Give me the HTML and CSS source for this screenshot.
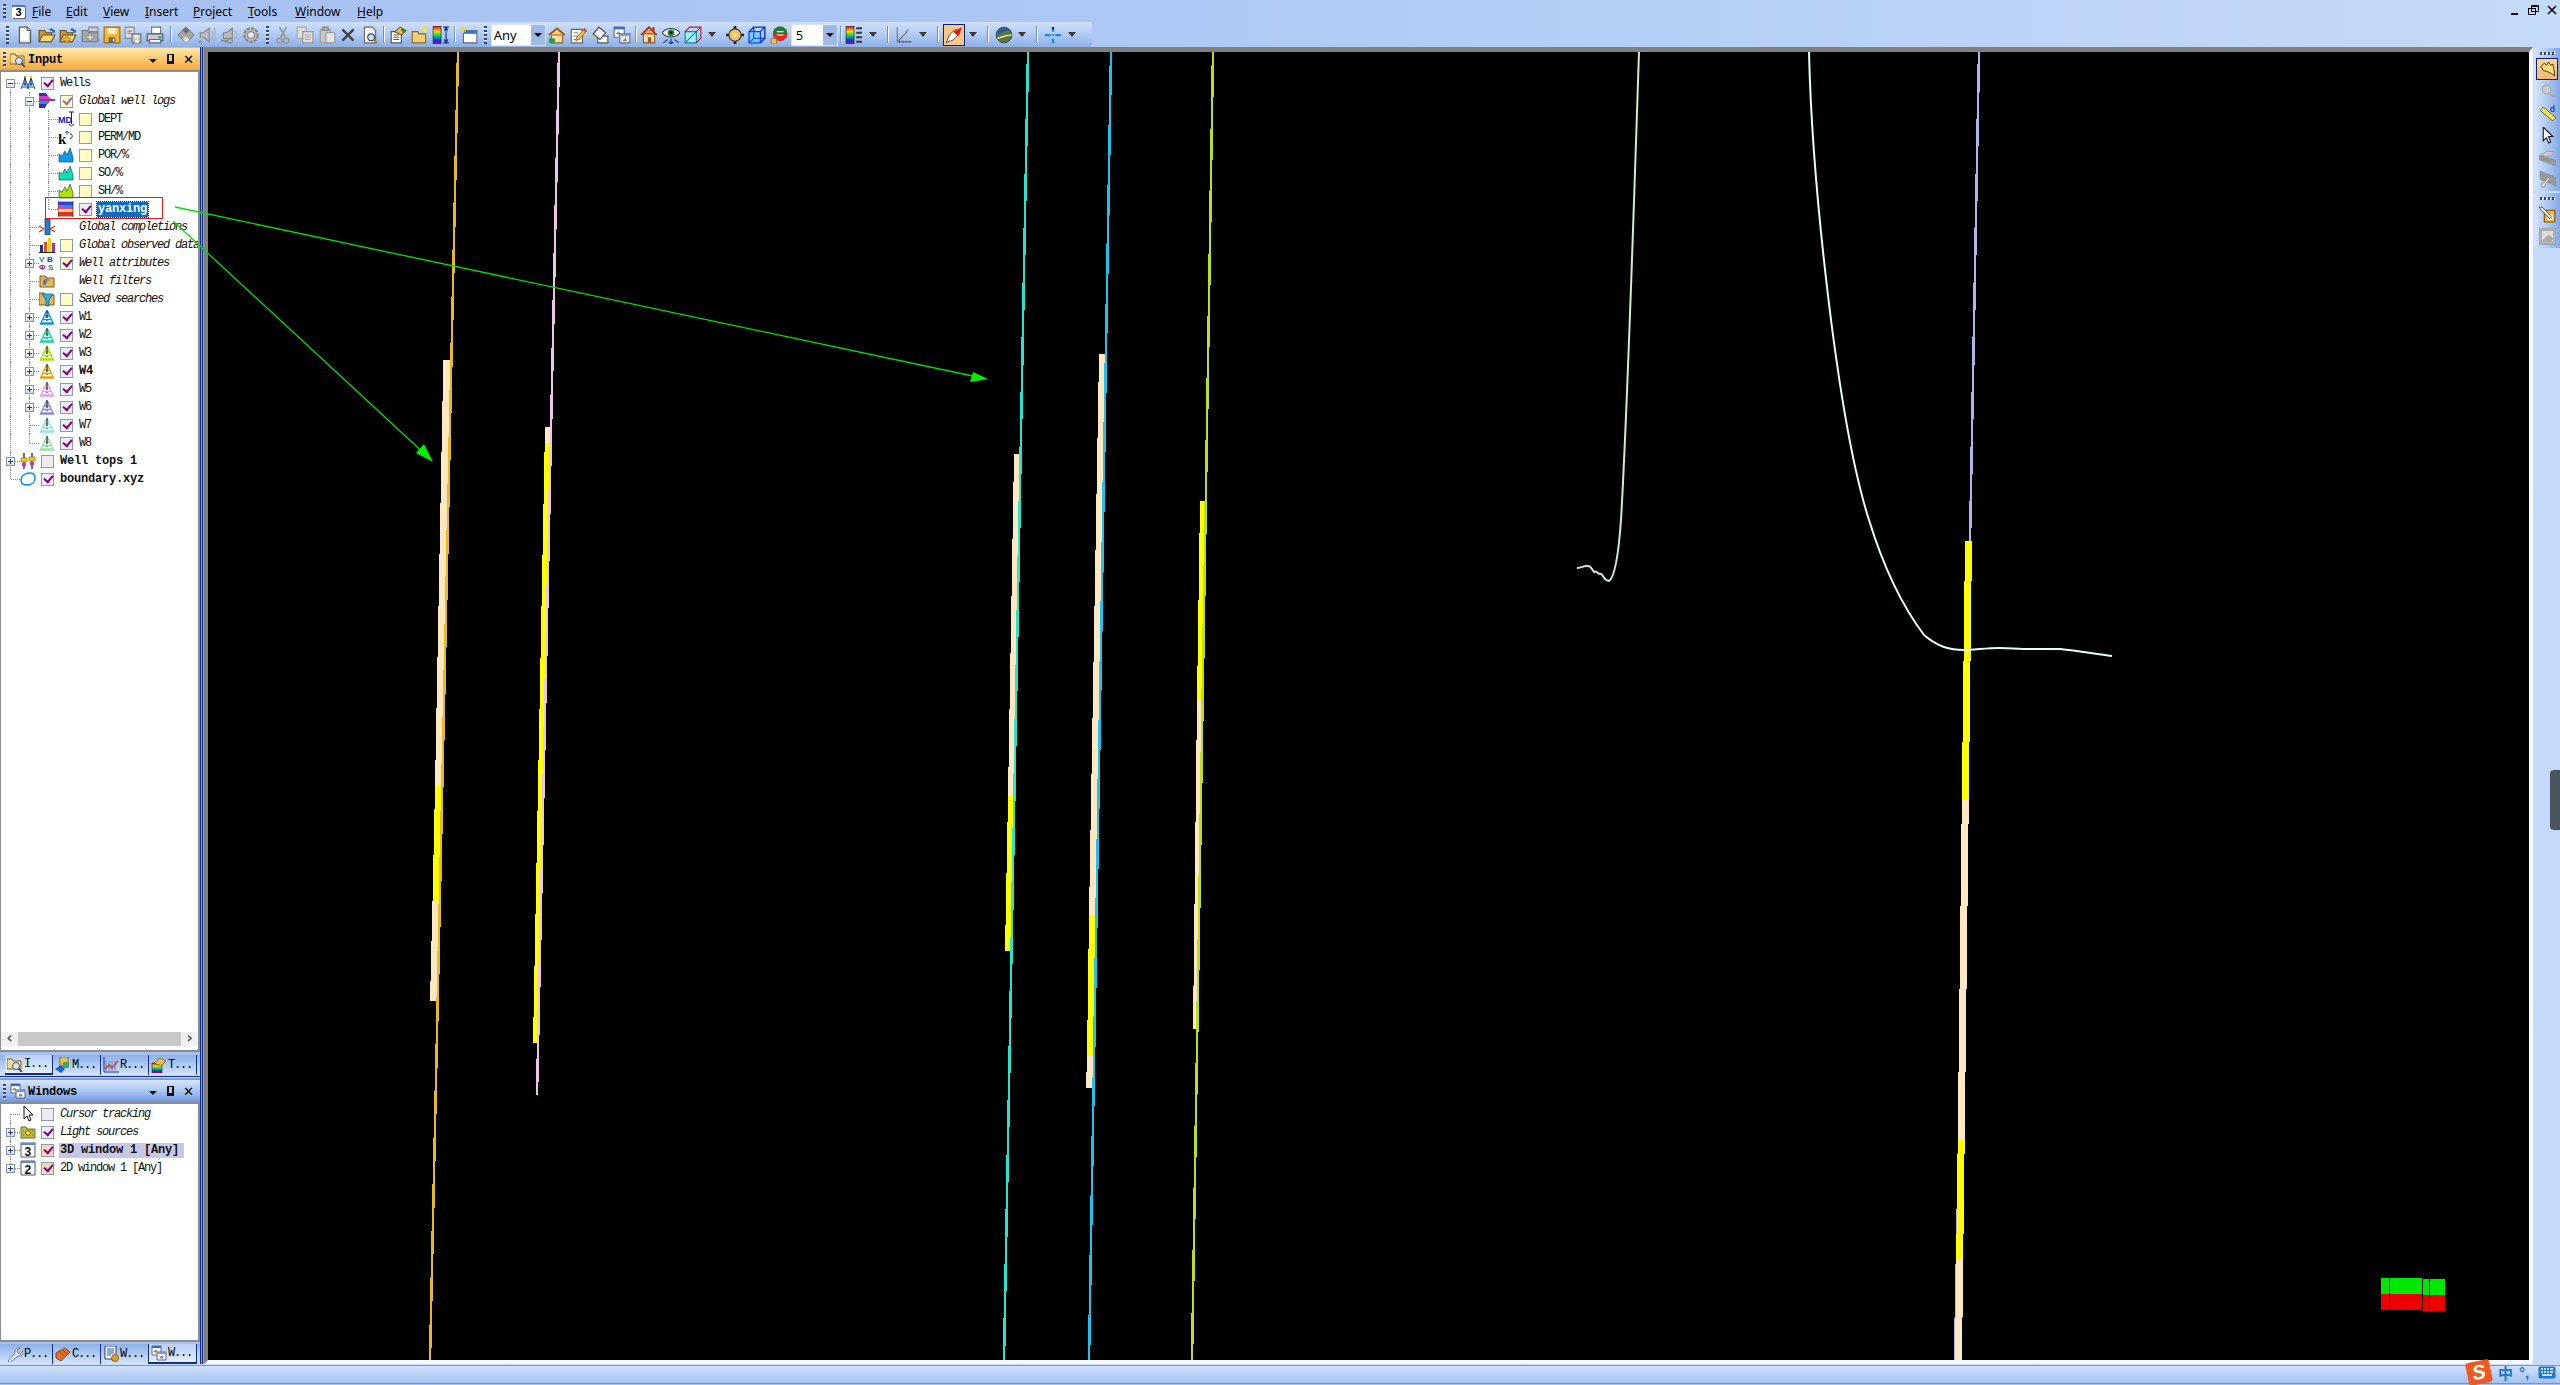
FILE: index.html
```html
<!DOCTYPE html>
<html lang="en">
<head>
<meta charset="utf-8">
<title>3D window 1</title>
<link rel="stylesheet" href="styles.css">
</head>
<body>
<svg class="defs" aria-hidden="true">
  <symbol id="new" viewBox="0 0 16 16"><path d="M3 1h7l3 3v11H3z" fill="#fff" stroke="#555"/><path d="M10 1v3h3" fill="#ddd" stroke="#555"/><path d="M12 5v9H5" fill="none" stroke="#bcc6d8"/></symbol>
  <symbol id="open" viewBox="0 0 16 16"><path d="M1 14V4h5l1 2h5v8z" fill="#c8963c" stroke="#6b5320"/><path d="M1 14l3-6h11l-3 6z" fill="#f6d47a" stroke="#6b5320"/><path d="M10 3c2-2 3-1 4 1l1-1v3h-3l1-1c-1-1-2-1-3-2z" fill="#2f5fb0"/></symbol>
  <symbol id="openplus" viewBox="0 0 16 16"><path d="M1 14V4h5l1 2h5v8z" fill="#c8963c" stroke="#6b5320"/><path d="M1 14l3-6h11l-3 6z" fill="#f6d47a" stroke="#6b5320"/><path d="M4 11h2V9h2v2h2v2H8v2H6v-2H4z" fill="#f8b818" stroke="#a06010" stroke-width=".5"/><path d="M10 3c2-2 3-1 4 1l1-1v3h-3l1-1c-1-1-2-1-3-2z" fill="#2f5fb0"/></symbol>
  <symbol id="foldergrey" viewBox="0 0 16 16"><path d="M1 14V4h5l1 2h8v8z" fill="#a8a8a8" stroke="#777"/><path d="M5 9h2V7h2v2h2v2H9v2H7v-2H5z" fill="#e0e0e0" stroke="#777" stroke-width=".5"/><path d="M7 1h8v4H7z" fill="#ccc" stroke="#888"/></symbol>
  <symbol id="save" viewBox="0 0 16 16"><path d="M1 1h14v14H1z" fill="#f6b62c" stroke="#a86a10"/><path d="M4 2h8v5H4z" fill="#fff4cc"/><path d="M5 10h6v5H5z" fill="#6b6b6b"/><path d="M9 11h1v3H9z" fill="#eee"/></symbol>
  <symbol id="saveas" viewBox="0 0 16 16"><path d="M1 1h8v10H1z" fill="#ddd" stroke="#888"/><path d="M7 7h8v8H7z" fill="#bbb" stroke="#777"/><path d="M9 8h4v3H9zM10 12h3v3h-3z" fill="#eee"/><path d="M3 4h4v1H3zM3 6h3v1H3z" fill="#888"/></symbol>
  <symbol id="print" viewBox="0 0 16 16"><path d="M5 1h8v6H5z" fill="#fff" stroke="#777"/><path d="M1 7h14v6H1z" fill="#c4ccd8" stroke="#556"/><path d="M3 12h10v3H3z" fill="#eef" stroke="#667"/><path d="M11 9h3v2h-3z" fill="#18b050"/></symbol>
  <symbol id="diamond" viewBox="0 0 16 16"><path d="M8 1l7 7-7 7-7-7z" fill="#a9a9a9" stroke="#8a8a8a"/><path d="M8 1l3 3-3 3-3-3z" fill="#6f6f6f"/><path d="M8 15l-3-3 3-3 3 3z" fill="#ddd"/></symbol>
  <symbol id="speaker" viewBox="0 0 16 16"><path d="M2 6h3l5-4v12l-5-4H2z" fill="#bbb" stroke="#888"/><path d="M12 4c2 2 2 6 0 8M14 2c3 3 3 9 0 12" fill="none" stroke="#aaa"/><circle cx="2" cy="14" r="1.600" fill="#999"/></symbol>
  <symbol id="speakerkey" viewBox="0 0 16 16"><path d="M3 6h3l5-4v9H3z" fill="#bbb" stroke="#888"/><path d="M13 4c2 2 2 6 0 8" fill="none" stroke="#aaa"/><path d="M1 13h6M5 13v2" stroke="#888" stroke-width="1.400"/><circle cx="9" cy="13" r="2" fill="none" stroke="#888"/></symbol>
  <symbol id="gear" viewBox="0 0 16 16"><circle cx="8" cy="8" r="6" fill="#bbb" stroke="#888" stroke-width="2" stroke-dasharray="3 1"/><circle cx="8" cy="8" r="3" fill="#eee" stroke="#888"/></symbol>
  <symbol id="cut" viewBox="0 0 16 16"><path d="M5 1l5 9M11 1L6 10" stroke="#999" stroke-width="1.600" fill="none"/><circle cx="5" cy="13" r="2.200" fill="none" stroke="#999" stroke-width="1.400"/><circle cx="11" cy="13" r="2.200" fill="none" stroke="#999" stroke-width="1.400"/></symbol>
  <symbol id="copy" viewBox="0 0 16 16"><path d="M1 1h8v10H1z" fill="#ddd" stroke="#aaa"/><path d="M6 5h9v10H6z" fill="#ddd" stroke="#999"/><path d="M8 8h5M8 10h5M8 12h5" stroke="#aaa"/></symbol>
  <symbol id="paste" viewBox="0 0 16 16"><path d="M2 3h9v12H2z" fill="#c8c8c8" stroke="#999"/><path d="M4 1h5v3H4z" fill="#aaa" stroke="#888"/><path d="M7 6h8v9H7z" fill="#e4e4e4" stroke="#999"/></symbol>
  <symbol id="del" viewBox="0 0 16 16"><path d="M3 3l10 10M13 3L3 13" stroke="#444" stroke-width="2.200"/></symbol>
  <symbol id="find" viewBox="0 0 16 16"><path d="M3 1h7l3 3v11H3z" fill="#fff" stroke="#666"/><circle cx="9" cy="10" r="3" fill="#bfe4ff" stroke="#444"/><path d="M11 12l3 3" stroke="#b08020" stroke-width="2"/></symbol>
  <symbol id="props" viewBox="0 0 16 16"><path d="M2 5h9v10H2z" fill="#fff" stroke="#555"/><path d="M4 8h5M4 10h5M4 12h5" stroke="#555"/><path d="M5 5l5-4 5 3-4 4z" fill="#e8c050" stroke="#7a5a10"/><path d="M11 3l3 2" stroke="#1a8a30" stroke-width="2"/></symbol>
  <symbol id="foldernew" viewBox="0 0 16 16"><path d="M1 15V5h5l1 2h6v8z" fill="#f4d070" stroke="#8a6a20"/><path d="M12 0v6M9 3h6M10 1l4 4M14 1l-4 4" stroke="#f4e040"/></symbol>
  <symbol id="colorbar" viewBox="0 0 16 16"><defs><linearGradient id="rb" x1="0" y1="0" x2="0" y2="1"><stop offset="0" stop-color="#e00040"/><stop offset=".3" stop-color="#f0e000"/><stop offset=".55" stop-color="#00d060"/><stop offset=".8" stop-color="#1030e0"/><stop offset="1" stop-color="#c000c0"/></linearGradient></defs><path d="M1 0h7v16H1z" fill="url(#rb)" stroke="#222" stroke-width=".6"/><path d="M10 1h5M10 15h5M12.500 1v14M11 4l1.500-3L14 4M11 12l1.500 3L14 12" stroke="#103090" fill="none"/></symbol>
  <symbol id="winnew" viewBox="0 0 16 16"><path d="M3 4h12v11H3z" fill="#fff" stroke="#667"/><path d="M3 4h12v3H3z" fill="#3a78c8"/><path d="M3 0v6M0 3h6M1 1l4 4M5 1L1 5" stroke="#f4d840"/></symbol>
  <symbol id="homegreen" viewBox="0 0 16 16"><path d="M1 8l7-6 7 6" fill="#f4d080" stroke="#a05010" stroke-width="1.500"/><path d="M3 8h10v7H3z" fill="#f6dca0" stroke="#a06020"/><path d="M1 11h5v4H1z" fill="#1aa030"/></symbol>
  <symbol id="note" viewBox="0 0 16 16"><path d="M2 3h10v12H2z" fill="#fff" stroke="#666"/><path d="M4 6h4M4 9h4M4 12h6" stroke="#888"/><path d="M7 10l7-8 2 2-7 8-3 1z" fill="#f4c040" stroke="#905020" stroke-width=".7"/><path d="M13 3l2 2" stroke="#e04020" stroke-width="1.500"/></symbol>
  <symbol id="bucket" viewBox="0 0 16 16"><path d="M6 9h9v6H6z" fill="#fff" stroke="#555"/><path d="M2 7l5-6 6 5-5 6z" fill="#eef" stroke="#445"/><path d="M1 8c-1 2 0 3 1 3s1-2 1-3z" fill="#f0c040"/></symbol>
  <symbol id="twowin" viewBox="0 0 16 16"><path d="M1 1h9v9H1z" fill="#fff" stroke="#668"/><path d="M1 1h9v2H1z" fill="#3a6ac0"/><path d="M6 7h9v8H6z" fill="#eef" stroke="#668"/><path d="M6 7h9v2H6z" fill="#7a9ad8"/><path d="M3 7l2-2 1 2zM9 13l2-2 1 2z" fill="#e0b000" stroke="#222" stroke-width=".4"/></symbol>
  <symbol id="house" viewBox="0 0 16 16"><path d="M1 8l7-7 7 7" fill="#f0a060" stroke="#a03010" stroke-width="1.500"/><path d="M3 7h10v8H3z" fill="#f8e0a8" stroke="#906020"/><path d="M7 10h3v5H7z" fill="#a05820"/><path d="M11 1h2v4h-2z" fill="#c03020"/></symbol>
  <symbol id="eye" viewBox="0 0 16 16"><path d="M0 6c4-5 12-5 16 0-4 5-12 5-16 0z" fill="#eee" stroke="#333"/><circle cx="8" cy="6" r="3" fill="#1a8a40"/><circle cx="8" cy="6" r="1.200" fill="#000"/><path d="M1 15l4-3M15 15l-4-3M8 11v5M6 14l2 2 2-2" stroke="#1a3a90" fill="none"/></symbol>
  <symbol id="cube" viewBox="0 0 16 16"><path d="M1 5h10v10H1z" fill="#a8ecf4" stroke="#108898"/><path d="M1 5l4-4h10v10l-4 4" fill="none" stroke="#b02030"/><path d="M11 5l4-4" stroke="#b02030"/><path d="M1 15L11 5" stroke="#108898"/></symbol>
  <symbol id="target" viewBox="0 0 16 16"><path d="M8 0v16M0 8h16" stroke="#222" stroke-width="2.400"/><circle cx="8" cy="8" r="5.500" fill="#f4c060" stroke="#333"/><circle cx="8" cy="8" r="2" fill="#f8e0a0"/></symbol>
  <symbol id="bluecube" viewBox="0 0 16 16"><path d="M1 5h10v10H1zM5 1h10v10H5zM1 5l4-4M11 5l4-4M1 15l4-4M11 15l4-4" fill="none" stroke="#0030e0" stroke-width="1.200"/><path d="M1 5h10v10H1z" fill="#30d0f0" opacity=".35"/></symbol>
  <symbol id="lockglobe" viewBox="0 0 16 16"><circle cx="9" cy="7" r="6.500" fill="#e02828"/><path d="M2.500 7a6.500 6.500 0 0 1 13 0z" fill="#1a8030"/><path d="M6 5h6M6 8h6" stroke="#fff"/><path d="M1 11h5v5H1z" fill="#e8c050" stroke="#806010" stroke-width=".6"/></symbol>
  <symbol id="legend" viewBox="0 0 16 16"><path d="M1 0h7v16H1z" fill="url(#rb)" stroke="#222" stroke-width=".6"/><path d="M10 2h5M10 6h5M10 10h5M10 14h5" stroke="#333" stroke-width="1.600"/></symbol>
  <symbol id="axes" viewBox="0 0 16 16"><path d="M2 1v13h13M2 14l9-9" stroke="#777" fill="none"/><path d="M4 15v-2M7 15v-2M10 15v-2M13 15v-2" stroke="#555"/><path d="M9 6l3-3" stroke="#999" stroke-width="1.500"/></symbol>
  <symbol id="pencil" viewBox="0 0 16 16"><path d="M1 15l3-7 5-5 4 3-5 6z" fill="#fff" stroke="#333" stroke-width=".7"/><path d="M7 5l8-4-3 8z" fill="#e01818"/></symbol>
  <symbol id="globe" viewBox="0 0 16 16"><circle cx="8" cy="8" r="7" fill="#5a7a3a" stroke="#222" stroke-width=".6"/><path d="M2 5c3-3 8-4 11-2 1 2-5 1-7 3S3 8 2 5z" fill="#2a5ab0"/><path d="M2 11c4-1 8-3 13-3" stroke="#fff" fill="none"/></symbol>
  <symbol id="cross" viewBox="0 0 16 16"><path d="M1 8h5M10 8h5M8 1v4M8 11v4" stroke="#1a8ae0" stroke-width="2"/><path d="M7 1h2v2H7z" fill="#103060"/><circle cx="8" cy="8" r="1" fill="#1a8ae0"/></symbol>

  <symbol id="t-wells" viewBox="0 0 16 16"><path d="M1 14L5 3l4 11M7 14l4-11 4 11M3 9h4M9 9h4M2 12h6M8 12h6" stroke="#0a50d0" fill="none"/><path d="M5 1v10M11 1v10" stroke="#111"/><circle cx="11" cy="2" r="1.500" fill="#f0d020"/></symbol>
  <symbol id="t-logs" viewBox="0 0 16 16"><path d="M0 0h7l2 3H0z" fill="#3030c0"/><path d="M0 3h9l3 3H0z" fill="#d040c0"/><path d="M0 6h16v2H0z" fill="#a030a0"/><path d="M0 8h11l-2 3H0z" fill="#2090e0"/><path d="M0 11h8l-2 4H0z" fill="#3030c0"/></symbol>
  <symbol id="t-hist" viewBox="0 0 16 16"><path d="M1 15V7l3 2 3-5 2 4 3-7 3 9v5z" fill="currentColor" stroke="#0b3a58" stroke-width=".6"/></symbol>
  <symbol id="t-yan" viewBox="0 0 16 16"><path d="M0 1h15v3H0z" fill="#3040d0"/><path d="M0 4h15v4H0z" fill="#e040c0"/><path d="M0 8h15v3H0z" fill="#f0e020"/><path d="M0 11h15v4H0z" fill="#e03030"/><path d="M6 4h9v3H6z" fill="#2090e0"/><path d="M0 0h15v16H0z" fill="none" stroke="#222" stroke-width=".7"/></symbol>
  <symbol id="t-comp" viewBox="0 0 16 16"><path d="M6 0h5v16H6z" fill="#2080d0" stroke="#103060" stroke-width=".7"/><path d="M0 7l5 3M0 13l5-3M11 10l5-3M11 10l5 3" stroke="#e03010" stroke-width="1.400"/></symbol>
  <symbol id="t-obs" viewBox="0 0 16 16"><path d="M1 8h3v7H1z" fill="#2030a0"/><path d="M5 5h3v10H5z" fill="#e05020"/><path d="M9 1h3v14H9z" fill="#f0d010"/><path d="M13 6h3v9h-3z" fill="#a030c0"/><path d="M0 15.500h16" stroke="#222"/></symbol>
  <symbol id="t-filt" viewBox="0 0 16 16"><path d="M1 14V3h5l1 2h8v9z" fill="#e8b850" stroke="#7a5a20"/><path d="M5 7h5M5 9h3M5 11h2M5 7v5" stroke="#2050c0"/></symbol>
  <symbol id="t-search" viewBox="0 0 16 16"><path d="M0 14V2h5l1 2h9v10z" fill="#e8b850" stroke="#7a5a20"/><path d="M3 3h11L10 9v6H7V9z" fill="#30b0e8" stroke="#105080" stroke-width=".7"/></symbol>
  <symbol id="t-der" viewBox="0 0 16 16"><path d="M1.500 15L7 3h2l5.500 12zM5 7h6M3.500 10.500h9M2 14h12" fill="none" stroke="currentColor" stroke-width="1.300"/><path d="M8 1v8" stroke="#222" stroke-width="1.200"/><path d="M8 11v1" stroke="#222"/></symbol>
  <symbol id="t-tops" viewBox="0 0 16 16"><path d="M4 0v16M12 0v16" stroke="#111" stroke-width="1.200"/><path d="M1 5h6v4H1zM9 4h6v4H9z" fill="#f0d010" stroke="#806000" stroke-width=".6"/><path d="M2 10h4v3H2zM10 9h4v3h-4z" fill="#d030d0"/></symbol>
  <symbol id="t-ring" viewBox="0 0 16 16"><path d="M1 9c0-4 4-7 9-7 4 0 5 2 5 5 0 4-3 7-8 7-4 0-6-2-6-5z" fill="none" stroke="#0a90e8" stroke-width="1.500"/></symbol>
  <symbol id="t-cursor" viewBox="0 0 16 16"><path d="M4 0v13l3-3 2 5 2-1-2-5h4z" fill="#fff" stroke="#111"/></symbol>
  <symbol id="t-light" viewBox="0 0 16 16"><path d="M1 14V3h5l1 2h8v9z" fill="#b8c048" stroke="#6a7020"/><circle cx="8" cy="9" r="2.500" fill="#f0e040" stroke="#806010"/><path d="M3 7h1M3 11h1M12 7h1M12 11h1" stroke="#806010"/></symbol>
  <symbol id="t-inp" viewBox="0 0 16 16"><path d="M0 13V3h5l1 2h8v8z" fill="#f8dc90" stroke="#806020"/><circle cx="9" cy="10" r="3.500" fill="#cfe8ff" stroke="#556"/><path d="M11.500 12.500L15 16" stroke="#555" stroke-width="2"/></symbol>
  <symbol id="t-model" viewBox="0 0 16 16"><path d="M5 0h8v9H5z" fill="#e8c050" stroke="#705010" stroke-width=".7"/><path d="M8 5h6v6H8z" fill="#50a060"/><path d="M0 12l6-4 4 4-4 4z" fill="#1a60e0"/></symbol>
  <symbol id="t-res" viewBox="0 0 16 16"><path d="M1 0v15h15" stroke="#203090" fill="none"/><path d="M2 12l4-4 3 3 6-7" stroke="#e85010" stroke-width="1.800" fill="none"/><path d="M3 4v10M6 4v10M9 4v10M12 4v10" stroke="#4060c0" stroke-width=".7"/></symbol>
  <symbol id="t-tpl" viewBox="0 0 16 16"><path d="M1 6h10v10H1z" fill="url(#rb)" stroke="#222" stroke-width=".6"/><path d="M3 6l6-5 6 3-5 5z" fill="#e8c050" stroke="#705010" stroke-width=".7"/></symbol>
  <symbol id="t-wrench" viewBox="0 0 16 16"><path d="M1 15l7-8a4 4 0 0 1 5-5l-3 3 1 2 2 1 3-3a4 4 0 0 1-5 5l-8 7z" fill="#d8e4f4" stroke="#667" stroke-width=".8"/></symbol>
  <symbol id="t-case" viewBox="0 0 16 16"><path d="M1 7l9-5 5 4-9 9-5-3z" fill="#e07028" stroke="#803010" stroke-width=".8"/><path d="M4 5l5 5M7 3l5 5" stroke="#a04010"/></symbol>
  <symbol id="t-flow" viewBox="0 0 16 16"><path d="M2 0h11v13H2z" fill="#fff" stroke="#1a3a90"/><path d="M4 3h7M4 5h7M4 7h7M4 9h4" stroke="#1a50c0"/><circle cx="12" cy="12" r="3.500" fill="#e0a020" stroke="#704010" stroke-width=".7"/></symbol>
  <symbol id="r-hand" viewBox="0 0 16 16"><path d="M2 5l3-3 2 2 2-3 2 3 2-1 1 5 1 6-3-2-4-2-4-1z" fill="#f8e070" stroke="#333" stroke-width=".9"/></symbol>
  <symbol id="r-zoom" viewBox="0 0 16 16"><circle cx="7" cy="6" r="4" fill="#ccc" stroke="#aaa"/><path d="M10 9l4 4" stroke="#aaa" stroke-width="2"/></symbol>
  <symbol id="r-g1" viewBox="0 0 16 16"><path d="M0 6l4 0 12 5v5L0 10z" fill="#999" stroke="#888" stroke-width=".5"/><path d="M2 5l6-3 6 1-2 3-6 1z" fill="#ccc" stroke="#999" stroke-width=".7"/></symbol>
  <symbol id="r-g2" viewBox="0 0 16 16"><path d="M1 0l15 6v8L1 8z" fill="#999" stroke="#888" stroke-width=".5"/><circle cx="4" cy="13" r="2" fill="#ddd" stroke="#999"/><path d="M5 12l4-5" stroke="#ddd"/></symbol>
  <symbol id="r-set" viewBox="0 0 16 16"><path d="M5 4h10v11H5z" fill="#f4b830" stroke="#805010"/><path d="M8 8h5v5H8z" fill="#fff"/><path d="M0 1l3 0 9 9-2 2-8-8z" fill="#dde4f0" stroke="#444" stroke-width=".8"/></symbol>
  <symbol id="r-pic" viewBox="0 0 16 16"><path d="M0 0h16v15H0z" fill="#c8c8c8" stroke="#888"/><path d="M2 2h12v11H2z" fill="#ddd" stroke="#999"/><path d="M3 12l6-6 5 4-3 3z" fill="#aaa"/></symbol>
</svg>

<div class="app">
  <header class="menubar">
    <span class="grip mgrip"></span>
    <span class="appicon">3</span>
    <nav class="menus">
      <span class="m1"><u>F</u>ile</span>
      <span class="m2"><u>E</u>dit</span>
      <span class="m3"><u>V</u>iew</span>
      <span class="m4"><u>I</u>nsert</span>
      <span class="m5"><u>P</u>roject</span>
      <span class="m6"><u>T</u>ools</span>
      <span class="m7"><u>W</u>indow</span>
      <span class="m8"><u>H</u>elp</span>
    </nav>
    <div class="winctl">
      <svg width="10" height="10" viewBox="0 0 10 10"><path d="M1 8h7v2H1z" fill="#000"/></svg>
      <svg width="11" height="10" viewBox="0 0 11 10"><path d="M3.500.5h7v6h-7zM.5 3.500h7v6h-7z" fill="#c3d9f8" stroke="#000"/><path d="M3 1h8v1H3zM0 3h8v1H0z" fill="#000"/></svg>
      <svg width="10" height="10" viewBox="0 0 10 10"><path d="M1 1l8 8M9 1L1 9" stroke="#000" stroke-width="1.600"/></svg>
    </div>
  </header>

  <div class="toolbar">
    <span class="grip"></span>
    <span class="b"><svg><use href="#new"/></svg></span>
    <span class="b"><svg><use href="#open"/></svg></span>
    <span class="b"><svg><use href="#openplus"/></svg></span>
    <span class="b"><svg><use href="#foldergrey"/></svg></span>
    <span class="b"><svg><use href="#save"/></svg></span>
    <span class="b"><svg><use href="#saveas"/></svg></span>
    <span class="b"><svg><use href="#print"/></svg></span>
    <span class="sep"></span>
    <span class="b"><svg><use href="#diamond"/></svg></span>
    <span class="b"><svg><use href="#speaker"/></svg></span>
    <span class="b"><svg><use href="#speakerkey"/></svg></span>
    <span class="b"><svg><use href="#gear"/></svg></span>
    <span class="grip"></span>
    <span class="b"><svg><use href="#cut"/></svg></span>
    <span class="b"><svg><use href="#copy"/></svg></span>
    <span class="b"><svg><use href="#paste"/></svg></span>
    <span class="b"><svg><use href="#del"/></svg></span>
    <span class="b"><svg><use href="#find"/></svg></span>
    <span class="sep sep-n"></span>
    <span class="b"><svg><use href="#props"/></svg></span>
    <span class="b"><svg><use href="#foldernew"/></svg></span>
    <span class="b"><svg><use href="#colorbar"/></svg></span>
    <span class="sep sep-n"></span>
    <span class="b"><svg><use href="#winnew"/></svg></span>
    <span class="grip"></span>
    <span class="combo combo-any"><span class="ctext">Any</span><span class="cbtn"></span></span>
    <span class="b"><svg><use href="#homegreen"/></svg></span>
    <span class="b"><svg><use href="#note"/></svg></span>
    <span class="b"><svg><use href="#bucket"/></svg></span>
    <span class="b"><svg><use href="#twowin"/></svg></span>
    <span class="sep sep-n"></span>
    <span class="b"><svg><use href="#house"/></svg></span>
    <span class="b"><svg><use href="#eye"/></svg></span>
    <span class="b"><svg><use href="#cube"/></svg></span>
    <span class="arr"></span>
    <span class="gap"></span>
    <span class="b"><svg><use href="#target"/></svg></span>
    <span class="b"><svg><use href="#bluecube"/></svg></span>
    <span class="b"><svg><use href="#lockglobe"/></svg></span>
    <span class="combo combo-num"><span class="ctext">5</span><span class="cbtn"></span></span>
    <span class="sep sep-n"></span>
    <span class="b"><svg><use href="#legend"/></svg></span>
    <span class="arr"></span>
    <span class="sep sep-w"></span>
    <span class="b"><svg><use href="#axes"/></svg></span>
    <span class="arr"></span>
    <span class="sep sep-w"></span>
    <span class="b on"><svg><use href="#pencil"/></svg></span>
    <span class="arr"></span>
    <span class="sep sep-w"></span>
    <span class="b"><svg><use href="#globe"/></svg></span>
    <span class="arr"></span>
    <span class="sep sep-w"></span>
    <span class="b"><svg><use href="#cross"/></svg></span>
    <span class="arr"></span>
  </div>

  <main class="main">
    <aside class="side">
      <section class="pane pane-input">
        <div class="phead orange">
          <span class="grip pgrip"></span>
          <svg class="picon"><use href="#t-inp"/></svg>
          <span class="ptitle">Input</span>
          <span class="pbtns"><i class="tri"></i><i class="pin"></i><i class="cls">✕</i></span>
        </div>
        <div class="tree">
          <div class="row"><span class="c s"><i class="x"></i></span><svg class="ti"><use href="#t-wells"/></svg><b class="ck on wh"></b><span class="lb">Wells</span></div>
          <div class="row"><span class="c v"></span><span class="c t"><i class="x"></i></span><svg class="ti"><use href="#t-logs"/></svg><b class="ck on yl dim"></b><span class="lb it">Global well logs</span></div>
          <div class="row"><span class="c v"></span><span class="c v"></span><span class="c t"></span><svg class="ti" viewBox="0 0 16 16"><text x="0" y="12" class="svgb" fill="#0a20d0">MD</text><path d="M11 1h5M13.500 1v12M11 13l2.500 2 2.500-2" stroke="#102080" fill="none"/></svg><b class="ck yl"></b><span class="lb">DEPT</span></div>
          <div class="row"><span class="c v"></span><span class="c v"></span><span class="c t"></span><svg class="ti" viewBox="0 0 16 16"><text x="0" y="15" class="svgk" fill="#111">k</text><path d="M9 6V2M7 4l2-2 2 2" stroke="#3060d0" fill="none"/><path d="M12 5c3 0 3 4 0 5" stroke="#222" fill="none"/></svg><b class="ck yl"></b><span class="lb">PERM/MD</span></div>
          <div class="row"><span class="c v"></span><span class="c v"></span><span class="c t"></span><svg class="ti h1"><use href="#t-hist"/></svg><b class="ck yl"></b><span class="lb">POR/%</span></div>
          <div class="row"><span class="c v"></span><span class="c v"></span><span class="c t"></span><svg class="ti h2"><use href="#t-hist"/></svg><b class="ck yl"></b><span class="lb">SO/%</span></div>
          <div class="row"><span class="c v"></span><span class="c v"></span><span class="c t"></span><svg class="ti h3"><use href="#t-hist"/></svg><b class="ck yl"></b><span class="lb">SH/%</span></div>
          <div class="row"><span class="c v"></span><span class="c v"></span><span class="c e"></span><svg class="ti"><use href="#t-yan"/></svg><b class="ck on wh"></b><span class="lb sel">yanxing</span></div>
          <div class="row"><span class="c v"></span><span class="c t"></span><svg class="ti"><use href="#t-comp"/></svg><b class="ck none"></b><span class="lb it">Global completions</span></div>
          <div class="row"><span class="c v"></span><span class="c t"></span><svg class="ti"><use href="#t-obs"/></svg><b class="ck yl"></b><span class="lb it">Global observed data</span></div>
          <div class="row"><span class="c v"></span><span class="c t"><i class="x p"></i></span><svg class="ti" viewBox="0 0 16 16"><text x="0" y="7" class="svgs" fill="#1a8a70">V</text><text x="8" y="7" class="svgs" fill="#1a40a0">B</text><text x="0" y="15" class="svgs" fill="#9a1a9a">Φ</text><text x="9" y="15" class="svgs" fill="#1a8a70">S</text></svg><b class="ck on yl"></b><span class="lb it">Well attributes</span></div>
          <div class="row"><span class="c v"></span><span class="c t"></span><svg class="ti"><use href="#t-filt"/></svg><b class="ck none"></b><span class="lb it">Well filters</span></div>
          <div class="row"><span class="c v"></span><span class="c t"></span><svg class="ti"><use href="#t-search"/></svg><b class="ck yl"></b><span class="lb it">Saved searches</span></div>
          <div class="row"><span class="c v"></span><span class="c t"><i class="x p"></i></span><svg class="ti w1"><use href="#t-der"/></svg><b class="ck on wh"></b><span class="lb">W1</span></div>
          <div class="row"><span class="c v"></span><span class="c t"><i class="x p"></i></span><svg class="ti w2"><use href="#t-der"/></svg><b class="ck on wh"></b><span class="lb">W2</span></div>
          <div class="row"><span class="c v"></span><span class="c t"><i class="x p"></i></span><svg class="ti w3"><use href="#t-der"/></svg><b class="ck on wh"></b><span class="lb">W3</span></div>
          <div class="row"><span class="c v"></span><span class="c t"><i class="x p"></i></span><svg class="ti w4"><use href="#t-der"/></svg><b class="ck on wh"></b><span class="lb bd">W4</span></div>
          <div class="row"><span class="c v"></span><span class="c t"><i class="x p"></i></span><svg class="ti w5"><use href="#t-der"/></svg><b class="ck on wh"></b><span class="lb">W5</span></div>
          <div class="row"><span class="c v"></span><span class="c t"><i class="x p"></i></span><svg class="ti w6"><use href="#t-der"/></svg><b class="ck on wh"></b><span class="lb">W6</span></div>
          <div class="row"><span class="c v"></span><span class="c t"></span><svg class="ti w7"><use href="#t-der"/></svg><b class="ck on wh"></b><span class="lb">W7</span></div>
          <div class="row"><span class="c v"></span><span class="c e"></span><svg class="ti w8"><use href="#t-der"/></svg><b class="ck on wh"></b><span class="lb">W8</span></div>
          <div class="row"><span class="c t"><i class="x p"></i></span><svg class="ti"><use href="#t-tops"/></svg><b class="ck gr"></b><span class="lb bd">Well tops 1</span></div>
          <div class="row"><span class="c e"></span><svg class="ti"><use href="#t-ring"/></svg><b class="ck on wh"></b><span class="lb bd">boundary.xyz</span></div>
        </div>
        <div class="hscroll"><span class="sa">‹</span><span class="thumb"></span><span class="sa">›</span></div>
        <div class="tabs">
          <span class="tab active"><svg><use href="#t-inp"/></svg>I...</span>
          <span class="tab"><svg><use href="#t-model"/></svg>M...</span>
          <span class="tab"><svg><use href="#t-res"/></svg>R...</span>
          <span class="tab"><svg><use href="#t-tpl"/></svg>T...</span>
        </div>
      </section>
      <div class="paneline"></div>
      <section class="pane pane-win">
        <div class="phead bluehead">
          <span class="grip pgrip"></span>
          <svg class="picon"><use href="#twowin"/></svg>
          <span class="ptitle">Windows</span>
          <span class="pbtns"><i class="tri"></i><i class="pin"></i><i class="cls">✕</i></span>
        </div>
        <div class="tree">
          <div class="row"><span class="c s"></span><svg class="ti"><use href="#t-cursor"/></svg><b class="ck gr"></b><span class="lb it">Cursor tracking</span></div>
          <div class="row"><span class="c t"><i class="x p"></i></span><svg class="ti"><use href="#t-light"/></svg><b class="ck on wh"></b><span class="lb it">Light sources</span></div>
          <div class="row"><span class="c t"><i class="x p"></i></span><svg class="ti" viewBox="0 0 16 16"><path d="M1 1h14v14H1z" fill="#fff" stroke="#557"/><path d="M1 1h14v2H1z" fill="#5a8ad8"/><text x="4.500" y="14" class="svgn" fill="#111">3</text></svg><b class="ck on pe"></b><span class="lb bd act">3D window 1 [Any]</span></div>
          <div class="row"><span class="c e"><i class="x p"></i></span><svg class="ti" viewBox="0 0 16 16"><path d="M1 1h14v14H1z" fill="#fff" stroke="#557"/><path d="M1 1h14v2H1z" fill="#5a8ad8"/><text x="4.500" y="14" class="svgn" fill="#111">2</text></svg><b class="ck on pe"></b><span class="lb">2D window 1 [Any]</span></div>
        </div>
        <div class="tabs tabs-b">
          <span class="tab"><svg><use href="#t-wrench"/></svg>P...</span>
          <span class="tab"><svg><use href="#t-case"/></svg>C...</span>
          <span class="tab"><svg><use href="#t-flow"/></svg>W...</span>
          <span class="tab active"><svg><use href="#twowin"/></svg>W...</span>
        </div>
      </section>
    </aside>
    <div class="split"></div>

    <div class="viewport">
      <svg class="scene" viewBox="208 52 2321 1308" shape-rendering="crispEdges">
        <line class="wf" x1="1979" y1="52" x2="1955" y2="1360"/>
        <g class="pale">
          <polygon points="443.300,360 451.500,360 443,786 435,786"/>
          <polygon points="432.500,901 440.500,901 438,1001 430,1001"/>
          <polygon points="545,427 552,427 551.700,443 544.700,443"/>
          <polygon points="1014,454 1021,454 1015,796 1008,796"/>
          <polygon points="1099,354 1106,354 1097,915 1089,915"/>
          <polygon points="1087,1056 1094,1056 1093.500,1088 1086,1088"/>
          <polygon points="1197,700 1203,700 1198,1029 1193,1029"/>
          <polygon points="1961.800,800 1968.800,800 1964.700,1140 1957.700,1140"/>
          <polygon points="1956.200,1260 1963.200,1260 1962,1360 1955,1360"/>
        </g>
        <g class="yel">
          <polygon points="435,786 443,786 440.500,901 432.500,901"/>
          <polygon points="544.700,443 551.700,443 539,1043 533,1043"/>
          <polygon points="1008,796 1015,796 1012,951 1005,951"/>
          <polygon points="1089,915 1097,915 1094,1056 1087,1056"/>
          <polygon points="1200,501 1206,501 1203,700 1197,700"/>
          <polygon points="1965,541 1972,541 1968.800,800 1961.800,800"/>
          <polygon points="1957.700,1140 1964.700,1140 1963.200,1260 1956.200,1260"/>
        </g>
        <line class="wa" x1="458" y1="52" x2="430" y2="1360"/>
        <line class="wb" x1="559" y1="52" x2="537" y2="1095"/>
        <line class="wc" x1="1028" y1="52" x2="1004" y2="1360"/>
        <line class="wd" x1="1111" y1="52" x2="1089" y2="1360"/>
        <line class="we" x1="1213" y1="52" x2="1192" y2="1360"/>
        <g class="curves" shape-rendering="auto">
          <path class="cg" d="M1639 52C1634 200 1628 400 1621 520C1619 548 1615 577 1609 581C1604 581 1604 576 1601 574C1597 574 1597 570 1594 572C1590 566 1590 566 1587 566C1583 566 1580 568 1577 568"/>
          <path class="ch" d="M1809 52C1812 180 1837 420 1869 520C1885 572 1903 607 1924 635C1938 647 1950 650 1964 650C1975 650 1985 648 2000 648C2012 648 2014 649 2024 649C2040 649 2050 649 2060 649C2080 651 2095 654 2112 656"/>
        </g>
        <g class="legend-green">
          <rect x="2381" y="1278" width="41" height="16"/>
          <rect x="2422" y="1279" width="23" height="16"/>
        </g>
        <g class="legend-red">
          <rect x="2381" y="1294" width="41" height="16"/>
          <rect x="2422" y="1295" width="23" height="16"/>
        </g>
        <g class="legend-ticks">
          <rect x="2389" y="1278" width="1" height="32"/>
          <rect x="2422" y="1278" width="1" height="32"/>
          <rect x="2429" y="1279" width="1" height="30"/>
        </g>
      </svg>
    </div>

    <aside class="rail">
      <div class="railgroup">
        <span class="rgrip"></span>
        <span class="rb on"><svg><use href="#r-hand"/></svg></span>
        <span class="rb"><svg><use href="#r-zoom"/></svg></span>
        <span class="rb"><svg viewBox="0 0 16 16"><path d="M1 5l3-3 12 10-3 3z" fill="#f0e840" stroke="#444" stroke-width=".7"/><text x="10" y="7" class="svgs" fill="#2040c0">d</text></svg></span>
        <span class="rb"><svg><use href="#t-cursor"/></svg></span>
        <span class="rb"><svg><use href="#r-g1"/></svg></span>
        <span class="rb"><svg><use href="#r-g2"/></svg></span>
      </div>
      <div class="railgroup">
        <span class="rgrip"></span>
        <span class="rb"><svg><use href="#r-set"/></svg></span>
        <span class="rb"><svg><use href="#r-pic"/></svg></span>
      </div>
    </aside>
  </main>

  <footer class="status">
    <div class="tray">
      <span class="sogou">S</span>
      <span class="zh">中</span>
      <span class="punct">°,</span>
      <svg width="18" height="13" viewBox="0 0 18 13"><rect x=".5" y=".5" width="17" height="12" rx="2" fill="#1a78d0"/><path d="M3 3h2M6 3h2M9 3h2M12 3h3M3 6h2M6 6h2M9 6h2M12 6h3M4 9h10" stroke="#fff" stroke-width="1.300"/></svg>
    </div>
  </footer>

  <svg class="annot" viewBox="0 0 2560 1385">
    <line x1="175" y1="207" x2="982" y2="378"/>
    <polygon points="988,379 970,382 973,372"/>
    <line x1="173" y1="221" x2="428" y2="457"/>
    <polygon points="433,462 416,453 424,444"/>
  </svg>
  <div class="callout"></div>
  <div class="handle"></div>
</div>
</body>
</html>
```

FILE: styles.css
```css
* { box-sizing: border-box; }
html, body { margin: 0; padding: 0; width: 2560px; height: 1385px; overflow: hidden; }
body { position: relative; font-family: "Noto Sans", sans-serif; font-size: 12px; color: #000; }
.defs { position: absolute; left: 0; top: 0; width: 0; height: 0; }
.svgb { font: bold 9px "Liberation Sans", sans-serif; }
.svgk { font: bold 15px "Liberation Serif", serif; }
.svgs { font: bold 8px "Liberation Sans", sans-serif; }
.svgn { font: bold 12px "Liberation Sans", sans-serif; }

.app { position: relative; width: 2560px; height: 1385px; overflow: hidden; display: flex; flex-direction: column; background: linear-gradient(90deg, #a6c1f0 0%, #adc8f4 45%, #c4daf8 100%); }

/* menu */
.menubar { height: 22px; flex: none; display: flex; align-items: center; padding-left: 3px; }
.grip { flex: none; width: 3px; height: 18px; background: repeating-linear-gradient(#26459a 0 2px, rgba(255,255,255,.8) 2px 3px, transparent 3px 4px); }
.mgrip { height: 14px; }
.appicon { margin-left: 6px; width: 13px; height: 13px; background: #fff; border-top: 2px solid #4a7ac8; font: bold 11px/11px "Liberation Sans", sans-serif; text-align: center; box-shadow: 1px 1px 0 #667; }
.menus { display: flex; margin-left: 7px; line-height: 22px; padding-top: 1px; }
.menus u { text-decoration: underline; }
.m1 { width: 34px; } .m2 { width: 37px; } .m3 { width: 42px; } .m4 { width: 48px; } .m5 { width: 55px; } .m6 { width: 47px; } .m7 { width: 62px; }
.winctl { margin-left: auto; display: flex; align-items: center; gap: 8px; padding-right: 3px; height: 20px; margin-top: -3px; }

/* toolbar */
.toolbar { width: 1092px; height: 25px; flex: none; display: flex; align-items: center; padding-left: 3px; border-radius: 0 3px 3px 0; background: linear-gradient(#cfe0fb 0%, #b4cdf4 45%, #8db0e8 100%); }
.toolbar > .grip { margin: 0 5px 0 3px; }
.toolbar > .b ~ .grip { margin: 0 4px 0 4px; }
.b { flex: none; width: 21.700px; height: 22px; display: flex; align-items: center; justify-content: center; }
.b svg { width: 18px; height: 18px; }
.b.on { background: #fcc684; outline: 1px solid #0a1f7a; outline-offset: -1px; }
.sep { flex: none; width: 9px; height: 17px; background: linear-gradient(90deg, transparent 4px, #6f8fc8 4px 5px, #fff 5px 6px, transparent 6px); }
.sep-n { width: 6px; background: linear-gradient(90deg, transparent 2px, #6f8fc8 2px 3px, #fff 3px 4px, transparent 4px); }
.sep-w { width: 12px; background: linear-gradient(90deg, transparent 6px, #6f8fc8 6px 7px, #fff 7px 8px, transparent 8px); }
.arr { flex: none; width: 16px; display: flex; justify-content: center; }
.arr::after { content: ""; border-top: 5px solid #3a3a3a; border-left: 4px solid transparent; border-right: 4px solid transparent; }
.gap { flex: none; width: 5px; }
.combo { flex: none; height: 22px; display: flex; background: #fff; border: 1px solid #d8e4f8; }
.combo-any { width: 55px; }
.combo-num { width: 47px; margin-left: 1px; }
.ctext { flex: 1; font: 13px/20px "Noto Sans", sans-serif; padding-left: 2px; }
.combo-num .ctext { padding-left: 4px; color: #111; }
.cbtn { width: 14px; background: #9db9e8; display: flex; align-items: center; justify-content: center; }
.cbtn::after { content: ""; border-top: 4px solid #000; border-left: 4px solid transparent; border-right: 4px solid transparent; }

/* main */
.main { flex: 1; min-height: 0; display: flex; }
.side { width: 200px; flex: none; display: flex; flex-direction: column; padding-top: 1px; }
.pane { display: flex; flex-direction: column; }
.pane-input { height: 1027px; }
.pane-win { flex: 1; min-height: 0; }
.paneline { height: 5px; flex: none; background: linear-gradient(#c4d8f6 0 1px, #10307f 1px 2px, #c4d8f6 2px 3px, #7a9ee0 3px); }
.phead { height: 22px; flex: none; display: flex; align-items: center; padding-left: 3px; }
.orange { background: linear-gradient(#fde9ae 0%, #f9c86e 50%, #f3a93e 100%); }
.bluehead { background: linear-gradient(#d8e6fc 0%, #a9c5f2 50%, #6f97e0 100%); }
.pgrip { height: 15px; }
.picon { width: 16px; height: 16px; margin-left: 4px; flex: none; }
.ptitle { margin-left: 2px; padding-top: 1px; font: bold 12px "Liberation Mono", monospace; letter-spacing: -.2px; }
.pbtns { margin-left: auto; display: flex; align-items: center; width: 54px; padding-right: 5px; }
.tri { display: block; height: 0; width: 8px; margin-left: 3px; margin-right: 2px; margin-top: 3px; border-top: 4px solid #111; border-left: 4px solid transparent; border-right: 4px solid transparent; }
.pin { width: 7px; height: 10px; margin-left: 8px; border: 2px solid #111; border-top-width: 1px; border-bottom-width: 3px; }
.cls { margin-left: 9px; font: bold 13px/13px "DejaVu Sans", sans-serif; }

/* tree */
.tree { flex: 1; min-height: 0; background: #fff; border: 1px solid #8c8c8c; border-top-width: 2px; border-right-width: 2px; padding-top: 1px; overflow: hidden; white-space: nowrap; }
.pane-win .tree { border-bottom-width: 2px; }
.pane-input .tree { border-bottom: 0; padding-top: 2px; }
.row { height: 18px; display: flex; align-items: center; }
.c { flex: none; position: relative; width: 19px; height: 18px; }
.c::before, .c::after { content: ""; position: absolute; }
.v::before, .t::before { left: 9px; top: 0; bottom: 0; border-left: 1px dotted #888; }
.s::before { left: 9px; top: 9px; bottom: 0; border-left: 1px dotted #888; }
.e::before { left: 9px; top: 0; height: 9px; border-left: 1px dotted #888; }
.t::after, .e::after, .s::after { left: 10px; right: 0; top: 9px; border-top: 1px dotted #888; }
.x { position: absolute; z-index: 1; left: 5px; top: 5px; width: 9px; height: 9px; background: linear-gradient(#fff, #d8dce8); border: 1px solid #8494a8; }
.x::before { content: ""; position: absolute; left: 1px; top: 3px; width: 5px; height: 1px; background: #2a3a7a; }
.x.p::after { content: ""; position: absolute; left: 3px; top: 1px; width: 1px; height: 5px; background: #2a3a7a; }
.ti { flex: none; width: 16px; height: 16px; }
.h1 { color: #0a9ae8; } .h2 { color: #10e0b0; } .h3 { color: #b0e000; }
.w1 { color: #0a96dc; } .w2 { color: #10d8a8; } .w3 { color: #a8e000; } .w4 { color: #e8a000; }
.w5 { color: #e8a0e0; } .w6 { color: #8888e0; } .w7 { color: #90e8e0; } .w8 { color: #98e0a0; }
.ck { flex: none; position: relative; width: 13px; height: 13px; margin-left: 5px; border: 1px solid #8a9cb4; background: #eceef6; }
.ck.yl { background: #fffbc4; }
.ck.gr { background: #ececec; }
.ck.pe { background: #f6d8b8; }
.ck.none { visibility: hidden; }
.ck.on::after { content: ""; position: absolute; left: 2px; top: 1px; width: 7px; height: 4px; border-left: 2px solid #800080; border-bottom: 2px solid #800080; transform: rotate(-50deg); }
.ck.dim::after { border-color: #9a6aa0; }
.lb { margin-left: 5px; padding: 0 1px; height: 15px; font: 12px/15px "Liberation Mono", monospace; letter-spacing: -1.200px; color: #111; }
.it { font-style: italic; }
.bd { font-weight: bold; letter-spacing: -.2px; }
.sel { font-weight: bold; letter-spacing: -.2px; color: #fff; background: #0a6cc8; outline: 1px dotted #222; }
.act { background: #c8c8e6; padding-right: 5px; }

.hscroll { height: 20px; flex: none; display: flex; align-items: stretch; background: #fff; border-left: 1px solid #8c8c8c; border-right: 2px solid #8c8c8c; border-bottom: 2px solid #8c8c8c; padding-bottom: 4px; font: bold 15px/13px "DejaVu Sans", sans-serif; color: #555; }
.sa { flex: none; width: 17px; background: #f0f0f0; text-align: center; }
.thumb { flex: 1; background: #c8c8c8; }
.tabs { height: 20px; flex: none; display: flex; padding-left: 5px; background: linear-gradient(#8db1e8, #d3e3fb); }
.pane-input .tabs { margin-top: 3px; }
.tabs-b { margin-top: 2px; }
.tab { flex: none; width: 48px; display: flex; align-items: center; gap: 1px; padding-left: 2px; border-right: 1px solid #12307f; font: 12px "Liberation Mono", monospace; letter-spacing: -1.200px; white-space: nowrap; }
.tab svg { width: 16px; height: 16px; flex: none; }
.tab.active { background: linear-gradient(#b9d0f4, #e4eefc); border-right: 1px solid #12307f; border-bottom: 2px solid #12307f; }
.split { flex: none; width: 4px; background: linear-gradient(90deg, #12308a 0 1px, #7ea0e4 1px 2px, #12308a 2px 3px, #7ea0e4 3px); }

/* viewport */
.viewport { flex: 1; min-width: 0; background: #000; border-left: 4px solid #808080; border-top: 5px solid #808080; border-right: 4px solid #f6f8fc; border-bottom: 4px solid #f6f8fc; }
.scene { display: block; width: 100%; height: 100%; }
.pale polygon { fill: #ffe8c0; }
.yel polygon { fill: #ffff00; }
.scene line { stroke-width: 2.500; }
.wa { stroke: #e8bc18; }
.wb { stroke: #ecc4ec; }
.wc { stroke: #20e8d0; }
.wd { stroke: #18c4f0; }
.we { stroke: #bce010; }
.wf { stroke: #b4b4ec; }
.curves path { fill: none; stroke-width: 2; }
.cg { stroke: #cfeccb; }
.ch { stroke: #e2fff8; }
.legend-green rect { fill: #00e800; }
.legend-red rect { fill: #ec0000; }
.legend-ticks rect { fill: #000; }

/* right rail */
.rail { flex: none; width: 27px; padding: 1px 0 0 1px; display: flex; flex-direction: column; gap: 2px; }
.railgroup { display: flex; flex-direction: column; align-items: center; border-radius: 3px 0 0 3px; background: linear-gradient(90deg, #d5e4fb, #b0c9f2 50%, #84a8e4); padding-top: 3px; padding-bottom: 1px; }
.rgrip { width: 15px; height: 3px; margin: 1px 0 3px; background: repeating-linear-gradient(90deg, #26459a 0 2px, #fff 2px 3px, transparent 3px 4px); }
.rb { width: 22px; height: 22px; display: flex; align-items: center; justify-content: center; }
.rb svg { width: 17px; height: 17px; }
.rb.on { background: linear-gradient(#fdd49a, #fbb768); outline: 1px solid #0a1f7a; outline-offset: -1px; }

/* status bar */
.status { position: relative; height: 21px; flex: none; background: linear-gradient(#c9dcf9 0 1px, #7094d8 1px 2px, #cfe0fb 2px, #a6c3ef 90%, #6f94d8 90%, #6f94d8 95%, #a6c3ef 95%); }
.tray { position: absolute; right: 0; top: -4px; width: 95px; height: 25px; display: flex; align-items: center; }
.sogou { width: 24px; height: 23px; margin-left: 2px; border-radius: 3px; background: #ee5a22; color: #fff; font: italic bold 20px/23px "Liberation Sans", sans-serif; text-align: center; transform: rotate(-12deg); }
.zh { margin-left: 7px; color: #1a78d0; font: bold 15px "Noto Sans CJK SC", sans-serif; }
.punct { margin-left: 6px; width: 14px; color: #1a78d0; font: bold 15px "Liberation Sans", sans-serif; }
.tray svg { margin-left: 5px; flex: none; }

/* overlays */
.annot { position: absolute; left: 0; top: 0; width: 2560px; height: 1385px; pointer-events: none; }
.annot line { stroke: #00e000; stroke-width: 1.300; }
.annot polygon { fill: #00f000; }
.callout { position: absolute; left: 45px; top: 197px; width: 118px; height: 22px; border: 1px solid #e81818; pointer-events: none; }
.handle { position: absolute; right: 0; top: 770px; width: 10px; height: 60px; border-radius: 4px 0 0 4px; background: #4a5560; }
```
